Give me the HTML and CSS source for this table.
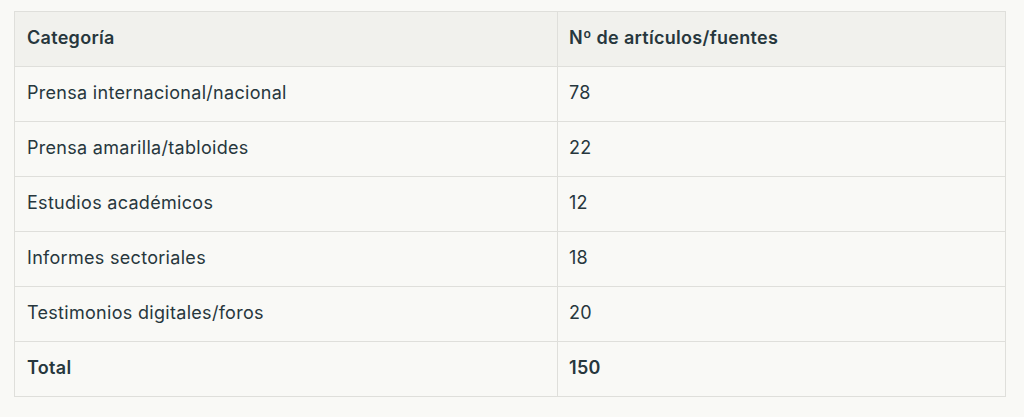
FILE: index.html
```html
<!DOCTYPE html>
<html lang="es">
<head>
<meta charset="utf-8">
<title>Fuentes</title>
<link rel="stylesheet" href="styles.css">
</head>
<body>
<div class="wrap">
<table class="tbl">
<thead>
<tr><th class="c1">Categoría</th><th class="c2">Nº de artículos/fuentes</th></tr>
</thead>
<tbody>
<tr><td>Prensa internacional/nacional</td><td>78</td></tr>
<tr><td>Prensa amarilla/tabloides</td><td>22</td></tr>
<tr><td>Estudios académicos</td><td>12</td></tr>
<tr><td>Informes sectoriales</td><td>18</td></tr>
<tr><td>Testimonios digitales/foros</td><td>20</td></tr>
<tr class="total"><td>Total</td><td>150</td></tr>
</tbody>
</table>
</div>
</body>
</html>
```
FILE: styles.css
```css
html, body {
  margin: 0;
  background: #f9f9f6;
}
.wrap {
  padding: 11px 18px 0 14px;
}
.tbl {
  width: 992px;
  border-collapse: collapse;
  table-layout: fixed;
  font-family: Inter, "Liberation Sans", sans-serif;
  font-size: 18px;
  letter-spacing: 0.3px;
  color: #27373d;
}
.tbl th, .tbl td {
  border: 1.5px solid #dfdfdb;
  height: 55px;
  padding: 0 11px 4px 12px;
  text-align: left;
  vertical-align: middle;
  box-sizing: border-box;
}
.tbl td + td, .tbl th + th {
  padding-left: 11px;
}
.tbl th {
  background: #f1f1ed;
  font-weight: 600;
}
.c1 { width: 543px; }
.total td { font-weight: 600; }
```
